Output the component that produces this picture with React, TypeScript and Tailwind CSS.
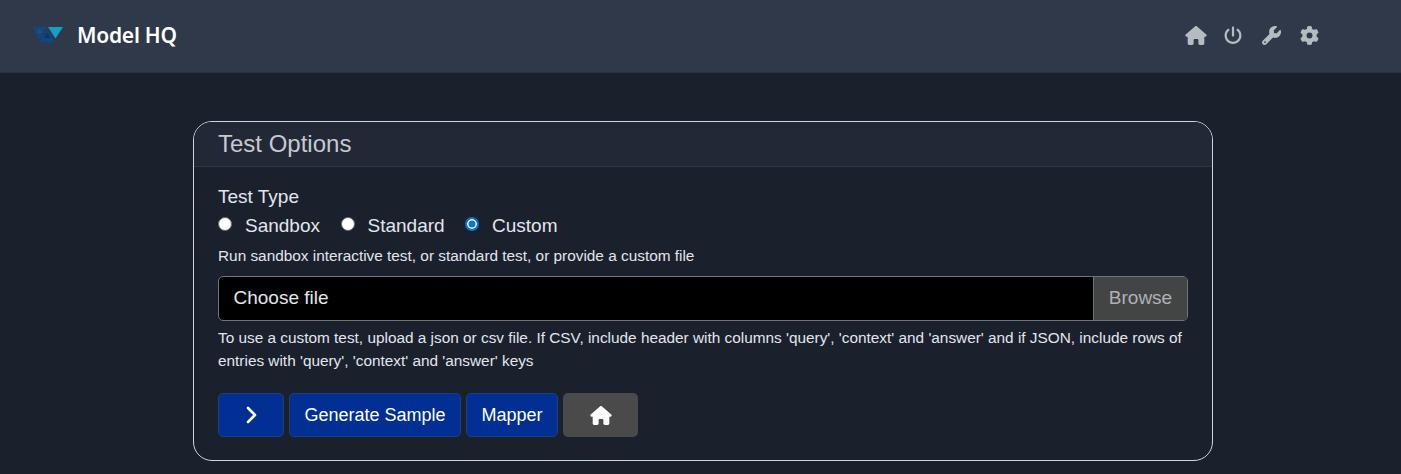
import { useState } from "react";
import { FaHouse, FaPowerOff, FaWrench, FaGear } from "react-icons/fa6";

const types = [
  { name: "Sandbox", cls: "w-[122.5px]" },
  { name: "Standard", cls: "w-[124.5px]" },
  { name: "Custom", cls: "" },
];

function Logo() {
  return (
    <svg width="32" height="18" viewBox="0 0 32 18" className="shrink-0">
      <path d="M0 1H15L7.500 13Z" fill="#10477f" />
      <path d="M7 16L15 4L23 16Z" fill="#0d4884" />
      <path d="M4.500 7L7.500 2L10.500 7Z" fill="#15518a" />
      <path d="M11.500 12L15 6L18.500 12Z" fill="#063974" />
      <path d="M16 1H31L23.500 12.500Z" fill="#139fc6" />
    </svg>
  );
}

export default function App() {
  const [selected, setSelected] = useState("Custom");
  return (
    <div className="h-[474px] overflow-hidden bg-[#1a202c] font-['Liberation_Sans',Arial,sans-serif] text-[#e2e6ec]">
      <header className="flex h-[73px] items-center justify-between border-b border-[#2a3343] bg-[#2f394a] pb-[2px] pl-[32px] pr-[82px]">
        <div className="flex items-center gap-[13px]">
          <Logo />
          <span className="font-['Noto_Sans',sans-serif] text-[21px] font-semibold leading-[30px] tracking-[-0.25px] text-white">Model HQ</span>
        </div>
        <nav className="flex items-center text-[19px] text-[#b5bcc1]">
          <FaHouse className="mr-[17px] h-[19px] w-[22px]" />
          <FaPowerOff className="mr-[20px] w-[18px]" />
          <FaWrench className="mr-[19px]" />
          <FaGear />
        </nav>
      </header>

      <main className="ml-[193px] mt-[48px] h-[340px] w-[1020px] overflow-hidden rounded-[19px] border border-[#cfd4de]">
        <h1 className="h-[45px] border-b border-[#303744] bg-[#222835] pl-[24px] text-[24px] leading-[44px] text-[#c6cad0]">
          Test Options
        </h1>
        <div className="px-[24px] pt-[16px]">
          <div className="text-[19px] leading-[28px]">Test Type</div>
          <div className="mt-px flex h-[28px] items-center text-[19px]">
            {types.map((t) => (
              <label key={t.name} className={`flex items-center ${t.cls}`}>
                <input
                  type="radio"
                  name="test-type"
                  className="peer sr-only"
                  checked={selected === t.name}
                  onChange={() => setSelected(t.name)}
                />
                <span className="mb-[4px] mr-[13px] size-[14px] shrink-0 rounded-full border border-[#646a72] bg-white peer-checked:border-2 peer-checked:border-[#0d76c8] peer-checked:bg-[#0d76c8] peer-checked:shadow-[inset_0_0_0_1.5px_white]" />
                {t.name}
              </label>
            ))}
          </div>
          <p className="mt-[4px] text-[15.37px] leading-[23px]">
            Run sandbox interactive test, or standard test, or provide a custom file
          </p>
          <div className="mt-[9px] flex h-[45px] overflow-hidden rounded-[5px] border border-[#70757a] bg-black text-[19px] leading-[42px]">
            <div className="flex-1 pl-[14.500px]">Choose file</div>
            <div className="w-[94px] border-l border-[#70757a] bg-[#434444] text-center text-[#aeb2b5]">Browse</div>
          </div>
          <p className="mt-[5px] text-[15.37px] leading-[23px]">
            To use a custom test, upload a json or csv file. If CSV, include header with columns 'query', 'context' and 'answer' and if JSON, include rows of entries with 'query', 'context' and 'answer' keys
          </p>
          <div className="mt-[21px] flex gap-[5px] text-[18px] text-white">
            <button className="flex h-[44px] w-[66px] items-center justify-center rounded-[5px] border border-[#1c4279] bg-[#012f94]">
              <svg width="12" height="18" viewBox="0 0 12 18" fill="none" stroke="currentColor" strokeWidth="2.6" strokeLinecap="round" strokeLinejoin="round">
                <path d="M3 2L10 9L3 16" />
              </svg>
            </button>
            <button className="h-[44px] w-[172px] rounded-[5px] border border-[#1c4279] bg-[#012f94]">Generate Sample</button>
            <button className="h-[44px] w-[92px] rounded-[5px] border border-[#1c4279] bg-[#012f94]">Mapper</button>
            <button className="flex h-[44px] w-[75px] items-center justify-center rounded-[5px] bg-[#4a4a4a]">
              <FaHouse className="h-[19px] w-[22px]" />
            </button>
          </div>
        </div>
      </main>
    </div>
  );
}
